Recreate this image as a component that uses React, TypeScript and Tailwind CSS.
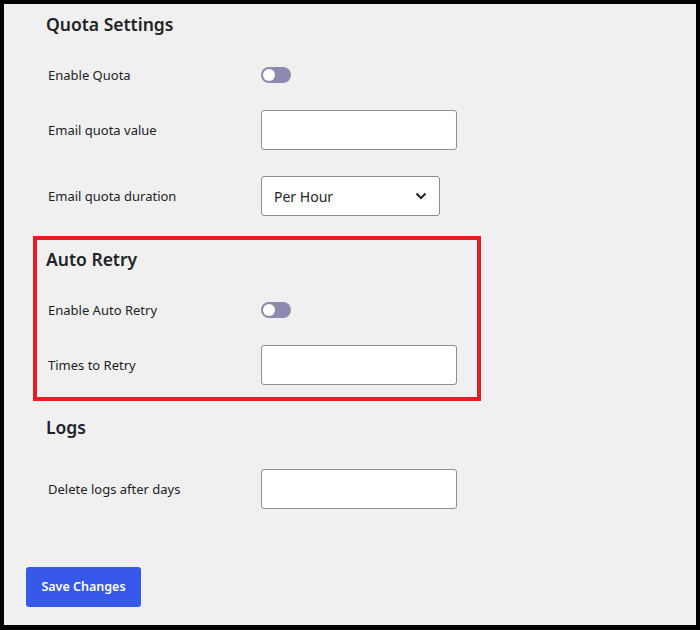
import React from "react";

function Toggle() {
  return (
    <div className="w-[30px] h-[16px] rounded-full bg-[#8b8bb0] flex items-center pl-[2px]">
      <div className="w-[12px] h-[12px] rounded-full bg-white" />
    </div>
  );
}

function TextInput() {
  return <div className="w-[196px] h-[40px] bg-white border border-[#8c8f94] rounded-[3px]" />;
}

function Row({ label, children, className = "" }: { label: string; children: React.ReactNode; className?: string }) {
  return (
    <div className={"flex items-center h-[40px] " + className}>
      <div className="w-[224px] pl-[11px] pt-[2px] text-[13px] text-[#1d2327]">{label}</div>
      {children}
    </div>
  );
}

function Heading({ children, className = "" }: { children: React.ReactNode; className?: string }) {
  return (
    <div className={"h-[28px] leading-[28px] pl-[9px] text-[17.5px] font-semibold text-[#1d2327] " + className}>
      {children}
    </div>
  );
}

export default function App() {
  return (
    <div
      className="w-[700px] h-[630px] bg-[#f0f0f0] border-t-4 border-l-4 border-r-4 border-b-[5px] border-black flex flex-col"
      style={{ fontFamily: '"Noto Sans", "Open Sans", sans-serif' }}
    >
      <div className="ml-[33px] w-[440px]">
        <Heading className="mt-[6px]">Quota Settings</Heading>
        <Row label="Enable Quota" className="mt-[17px]">
          <Toggle />
        </Row>
        <Row label="Email quota value" className="mt-[15px]">
          <TextInput />
        </Row>
        <Row label="Email quota duration" className="mt-[26px]">
          <div className="w-[179px] h-[40px] bg-white border border-[#8c8f94] rounded-[3px] flex items-center justify-between pl-[12px] pr-[12px]">
            <span className="text-[14px] text-[#1d2327]">Per Hour</span>
            <svg width="12" height="8" viewBox="0 0 12 8" fill="none">
              <path d="M1.5 1.5 L6 6 L10.5 1.5" stroke="#1d2327" strokeWidth="2" />
            </svg>
          </div>
        </Row>
      </div>
      <div className="ml-[29px] mt-[20px] w-[448px] h-[165px] border-4 border-[#e31e24]">
        <Heading className="mt-[5px]">Auto Retry</Heading>
        <Row label="Enable Auto Retry" className="mt-[17px]">
          <Toggle />
        </Row>
        <Row label="Times to Retry" className="mt-[15px]">
          <TextInput />
        </Row>
      </div>
      <div className="ml-[33px] w-[440px]">
        <Heading className="mt-[12px]">Logs</Heading>
        <Row label="Delete logs after days" className="mt-[28px]">
          <TextInput />
        </Row>
      </div>
      <div className="ml-[22px] mt-[58px]">
        <button className="w-[115px] h-[40px] bg-[#3858e9] text-white text-[12.5px] font-semibold rounded-[3px]">
          Save Changes
        </button>
      </div>
    </div>
  );
}
